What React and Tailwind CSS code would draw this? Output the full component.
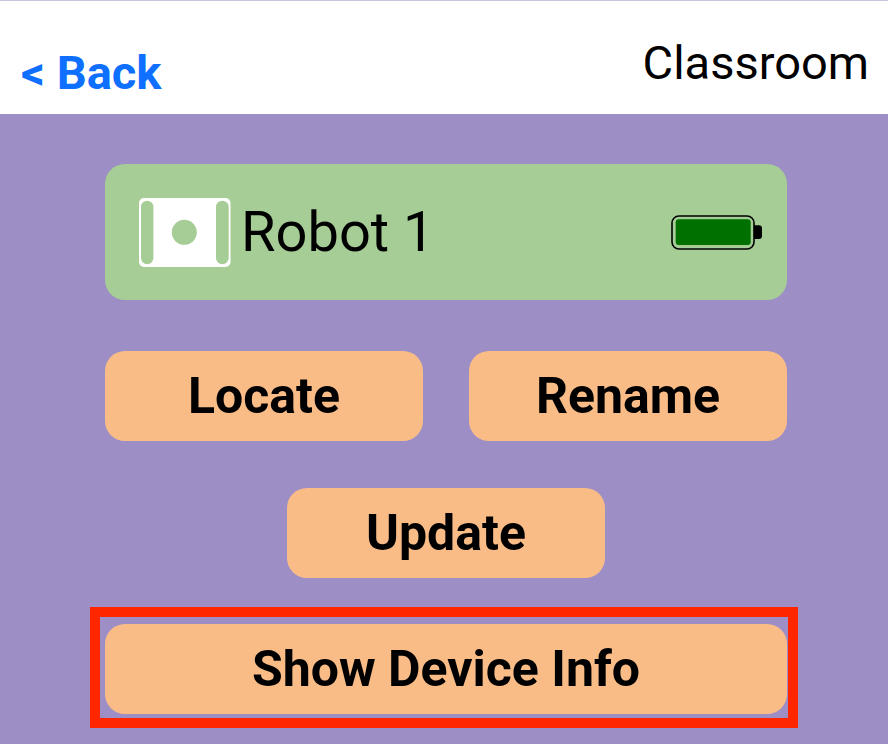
const font = "font-['Roboto',sans-serif]";

function RobotIcon() {
  return (
    <svg width="92" height="70" viewBox="0 0 92 70" className="shrink-0">
      <rect x="0" y="1" width="91.5" height="69" rx="5" fill="#fff" />
      <rect x="2" y="3.7" width="12.4" height="63.5" rx="6.2" fill="#a6cd95" />
      <rect x="77" y="3.7" width="12.7" height="63.5" rx="6.3" fill="#a6cd95" />
      <circle cx="45.3" cy="35.3" r="12.5" fill="#a6cd95" />
    </svg>
  );
}

function BatteryIcon() {
  return (
    <svg width="94" height="36" viewBox="0 0 94 36" className="shrink-0">
      <rect x="1" y="2" width="82" height="33" rx="7" fill="none" stroke="#000" strokeWidth="1.6" />
      <rect x="4.7" y="5.3" width="75" height="25.7" rx="3" fill="#007000" />
      <path d="M83 11.3h5a3 3 0 0 1 3 3v7.7a3 3 0 0 1-3 3h-5z" fill="#000" />
    </svg>
  );
}

function ActionButton({ children, className }) {
  return (
    <button className={`h-[90px] rounded-[20px] bg-[#f9bc87] text-[50px] font-bold text-black ${className}`}>
      {children}
    </button>
  );
}

export default function App() {
  return (
    <div className={`flex h-[744px] w-[888px] flex-col overflow-hidden bg-[#9d8ec6] ${font}`}>
      <header className="flex h-[114px] items-start justify-between border-t border-[#c9c3de] bg-white pl-[21px] pr-[19px]">
        <a className="mt-[43px] text-[47px] font-bold leading-[58px] text-[#0f6fff]">&lt; Back</a>
        <span className="mt-[33px] text-[47px] leading-[58px] text-black">Classroom</span>
      </header>

      <main className="flex flex-col pl-[105px] pr-[101px] pt-[50px]">
        <div className="flex h-[136px] items-center rounded-[20px] bg-[#a6cd95] pl-[34px] pr-[22px]">
          <RobotIcon />
          <span className="ml-[10px] flex-1 text-[56px] leading-none text-black">Robot 1</span>
          <BatteryIcon />
        </div>

        <div className="mt-[51px] flex justify-between">
          <ActionButton className="w-[318px]">Locate</ActionButton>
          <ActionButton className="w-[318px]">Rename</ActionButton>
        </div>

        <div className="mt-[47px] flex justify-center">
          <ActionButton className="w-[318px]">Update</ActionButton>
        </div>

        <div className="-ml-[15px] -mr-[11px] mt-[29px] border-[10px] border-[#ff2600] pb-[4px] pl-[5px] pr-[1px] pt-[7px]">
          <ActionButton className="block w-full">Show Device Info</ActionButton>
        </div>
      </main>
    </div>
  );
}
